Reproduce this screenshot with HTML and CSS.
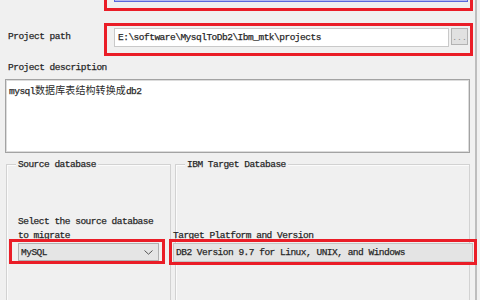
FILE: index.html
```html
<!DOCTYPE html>
<html>
<head>
<meta charset="utf-8">
<link rel="stylesheet" href="styles.css">
</head>
<body>
<div class="window">
  <div class="row">
    <span class="label row-label">Project name</span>
    <div class="hl hl-row">
      <div class="field focused">db2</div>
    </div>
  </div>
  <div class="row row-path">
    <span class="label row-label">Project path</span>
    <div class="hl hl-row">
      <div class="field">E:\software\MysqlToDb2\Ibm_mtk\projects</div>
      <div class="browse">...</div>
    </div>
  </div>
  <div class="label desc-label">Project description</div>
  <div class="textarea">mysql<span class="cjk">数据库表结构转换成</span>db2</div>
  <div class="groups">
    <div class="group group-source">
      <span class="legend">Source database</span>
      <div class="prompt prompt-source">Select the source database<br>to migrate</div>
      <div class="hl hl-combo">
        <div class="combo">
          <span>MySQL</span>
          <svg class="chev" width="9" height="5" viewBox="0 0 9 5"><polyline points="0.5,0.5 4.5,4.2 8.5,0.5" fill="none" stroke="#555" stroke-width="1"/></svg>
        </div>
      </div>
    </div>
    <div class="group group-target">
      <span class="legend">IBM Target Database</span>
      <div class="prompt prompt-target">Target Platform and Version</div>
      <div class="hl hl-target">
        <div class="rofield">DB2 Version 9.7 for Linux, UNIX, and Windows</div>
      </div>
    </div>
  </div>
</div>
</body>
</html>
```
FILE: styles.css
```css
html, body {
  margin: 0;
  padding: 0;
}
body {
  width: 480px;
  height: 300px;
  overflow: hidden;
  background: #f0f0f0;
  font-family: "Liberation Mono", "Noto Sans CJK SC", monospace;
  font-size: 9.5px;
  letter-spacing: -0.5px;
  color: #1a1a1a;
  -webkit-text-stroke: 0.25px #333;
}
.window {
  margin-top: -22px;
  height: 322px;
  background: linear-gradient(to right, #f0f0f0 475px, #bdbdbd 475px, #bdbdbd 477px, #f0f0f0 477px);
}
.label {
  line-height: 14px;
  white-space: nowrap;
}
.row {
  display: flex;
  align-items: flex-start;
  padding-right: 7px;
}
.row-path {
  margin-top: 12px;
}
.row-label {
  width: 104px;
  flex: none;
  box-sizing: border-box;
  padding-left: 8px;
  margin-top: 7px;
}
.hl {
  border: 3px solid #ea1d27;
}
.hl-row {
  flex: 1;
  display: flex;
  align-items: flex-start;
  padding: 2px 2px 6px 7px;
}
.field {
  flex: 1;
  height: 19px;
  box-sizing: border-box;
  background: #fff;
  border: 1px solid #c9c9c9;
  padding-left: 3px;
  line-height: 17px;
  white-space: nowrap;
  overflow: hidden;
}
.field.focused {
  border-color: #5a68dc;
  box-shadow: inset 0 0 0 1px #b4baf2;
}
.browse {
  flex: none;
  margin-left: 2px;
  width: 17px;
  height: 17px;
  box-sizing: border-box;
  background: #e1e1e1;
  border: 1px solid #b3b3b3;
  color: #8a8a8a;
  -webkit-text-stroke: 0;
  text-align: center;
  line-height: 17px;
  font-size: 8px;
  letter-spacing: 0;
}
.desc-label {
  margin-top: 5px;
  padding-left: 8px;
}
.textarea {
  margin: 4px 10px 0 5px;
  height: 74px;
  box-sizing: border-box;
  background: #fff;
  border: 1px solid #a3a3a3;
  box-shadow: inset 0 0 0 1px #dcdcdc;
  padding: 3px 2px 0 3px;
  line-height: 14px;
  white-space: nowrap;
}
.cjk {
  font-family: "Noto Sans CJK SC", sans-serif;
  font-size: 10px;
  letter-spacing: 0.1px;
  color: #2a2a2a;
  -webkit-text-stroke: 0;
}
.groups {
  display: flex;
  gap: 4px;
  margin-top: 11px;
  padding-left: 6px;
  width: 464px;
}
.group {
  position: relative;
  height: 160px;
  box-sizing: border-box;
  border: 1px solid #d2d2d2;
  box-shadow: inset 1px 1px 0 #fbfbfb;
  padding-top: 50px;
  display: flex;
  flex-direction: column;
  align-items: flex-start;
}
.group-source {
  width: 165px;
}
.group-target {
  flex: 1;
}
.legend {
  position: absolute;
  top: -7px;
  left: 9px;
  padding: 0 2px;
  background: #f0f0f0;
  line-height: 13px;
  white-space: nowrap;
}
.prompt {
  height: 28px;
  display: flex;
  flex-direction: column;
  justify-content: flex-end;
  line-height: 14px;
  white-space: nowrap;
}
.prompt-source {
  margin-left: 11px;
}
.prompt-target {
  margin-left: -3px;
}
.hl-combo {
  margin: -4px 0 0 2px;
  width: 156px;
  box-sizing: border-box;
  padding: 1px 3px 0 6px;
}
.combo {
  height: 18px;
  box-sizing: border-box;
  background: #e5e5e5;
  border: 1px solid #b0b0b0;
  display: flex;
  align-items: center;
  justify-content: space-between;
  padding: 0 5px 0 2px;
}
.hl-target {
  margin: -4px -8px 0 -7px;
  align-self: stretch;
  padding: 1px 1px 0 1px;
}
.rofield {
  height: 19px;
  box-sizing: border-box;
  background: #e4e4e4;
  border: 1px solid #c4c4c4;
  padding-left: 2px;
  line-height: 17px;
  white-space: nowrap;
}
```
